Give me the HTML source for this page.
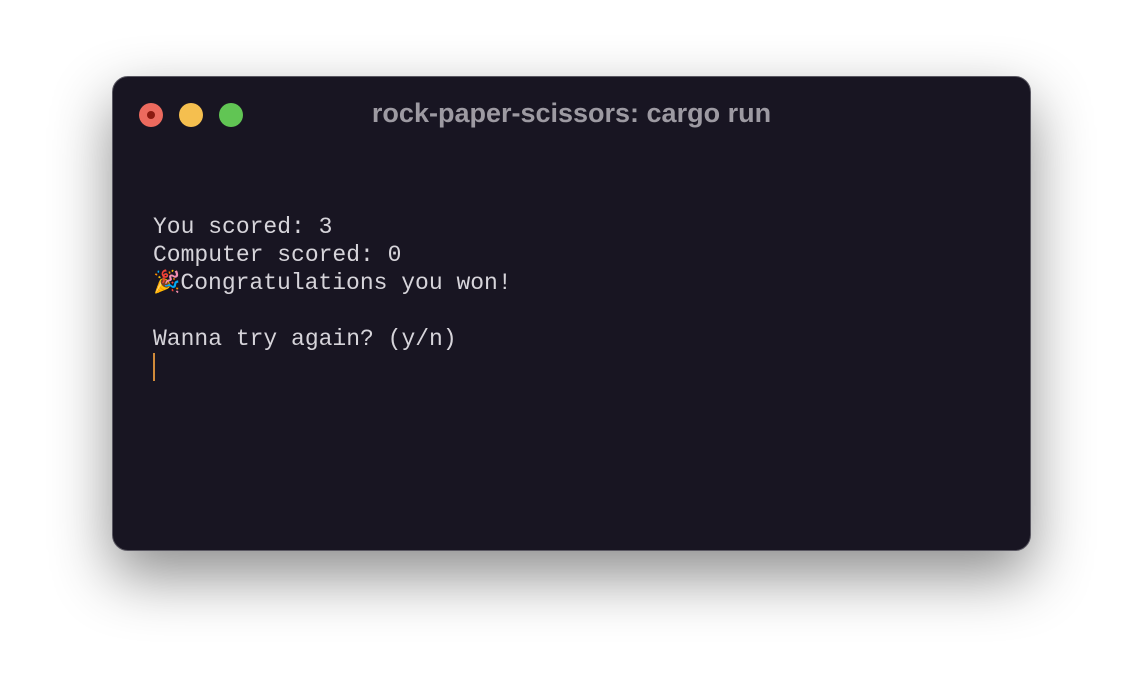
<!DOCTYPE html>
<html><head><style>
body{margin:0;width:1144px;height:700px;background:#fff;overflow:hidden;position:relative;font-family:"Liberation Sans",sans-serif}
.win{position:absolute;left:112px;top:76px;width:917px;height:473px;background:#181522;border:1px solid #5a5862;border-radius:16px;box-shadow:0 25px 60px rgba(0,0,0,0.45)}
.dot{position:absolute;top:26px;width:24px;height:24px;border-radius:50%}
.title{position:absolute;top:21px;left:0;right:0;text-align:center;color:#9d9aa2;font-weight:bold;font-size:27px}
.term{position:absolute;left:40px;top:136px;color:#d6d4da;font-family:"Liberation Mono",monospace;font-size:23px;line-height:28px;white-space:pre}
.cur{display:inline-block;width:2px;height:28px;background:#d08a3a;vertical-align:top}
</style></head><body>
<div class="win">
<div class="dot" style="left:26px;background:#ec6a5e"><div style="position:absolute;left:8px;top:8px;width:8px;height:8px;border-radius:50%;background:#8c1a10"></div></div>
<div class="dot" style="left:66px;background:#f5bf4f"></div>
<div class="dot" style="left:106px;background:#61c554"></div>
<div class="title">rock-paper-scissors: cargo run</div>
<div class="term">You scored: 3
Computer scored: 0
<span style="font-family:'Noto Color Emoji','DejaVu Sans',sans-serif;font-size:22px">🎉</span>Congratulations you won!

Wanna try again? (y/n)
<span class="cur"></span></div>
</div>
</body></html>
